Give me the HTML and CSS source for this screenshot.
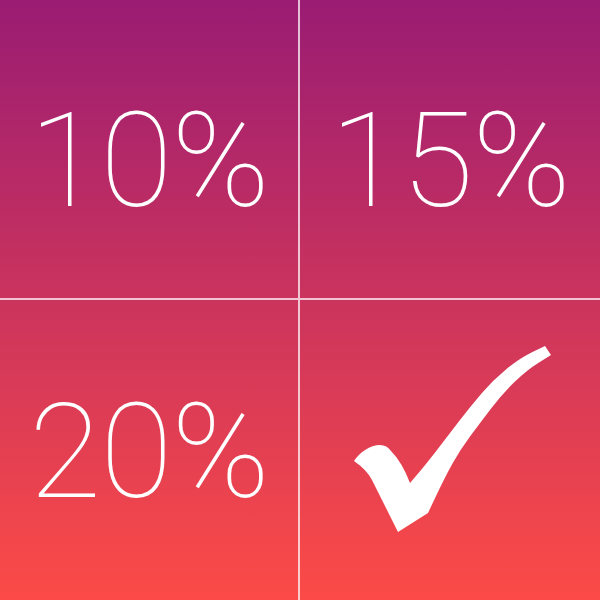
FILE: index.html
```html
<!DOCTYPE html>
<html>
<head>
<meta charset="utf-8">
<link rel="stylesheet" href="styles.css">
</head>
<body>
<div class="board">
  <div class="cell cell-tl"><span class="pct">10%</span></div>
  <div class="cell cell-tr"><span class="pct">15%</span></div>
  <div class="cell cell-bl"><span class="pct">20%</span></div>
  <div class="cell cell-br">
    <svg class="check" viewBox="300 300 300 300" width="300" height="300">
      <path fill="#fff" d="M 545 346 L 551 355 L 539 362.5 Q 527 370 515 381.5 Q 503 393 491.5 408 Q 480 423 470 436.5 Q 460 450 452.5 463.5 Q 445 477 436.5 495 L 428 513 L 398 532 L 392.5 521 Q 387 510 382 500 Q 377 490 372 480 Q 367 470 354 461 C 360 452, 370 445, 380 445 Q 387 445 391 451 Q 402 462 410 483 L 418.5 473 Q 427 463 438.5 448 Q 450 433 460 420 Q 470 407 481.5 393.5 Q 493 380 506.5 369 Q 520 358 532.5 352 Z"/>
    </svg>
  </div>
</div>
</body>
</html>
```
FILE: styles.css
```css
html, body {
  margin: 0;
  padding: 0;
}
.board {
  width: 600px;
  height: 600px;
  display: grid;
  grid-template-columns: 300px 300px;
  grid-template-rows: 300px 300px;
  background: linear-gradient(to bottom, #9a1c73 0%, #fc4b47 100%);
  font-family: Roboto, "Liberation Sans", sans-serif;
  color: #fff;
}
.cell {
  box-sizing: border-box;
  display: flex;
  align-items: center;
  justify-content: center;
  overflow: hidden;
}
.cell-tl, .cell-bl {
  border-right: 2px solid rgba(255, 255, 255, 0.72);
}
.cell-tl, .cell-tr {
  border-bottom: 2px solid rgba(255, 255, 255, 0.72);
  padding-top: 24px;
}
.cell-bl {
  padding-top: 4px;
}
.pct {
  font-size: 132px;
  font-weight: 100;
  line-height: 1;
  letter-spacing: -1px;
}
.check {
  display: block;
}
```
